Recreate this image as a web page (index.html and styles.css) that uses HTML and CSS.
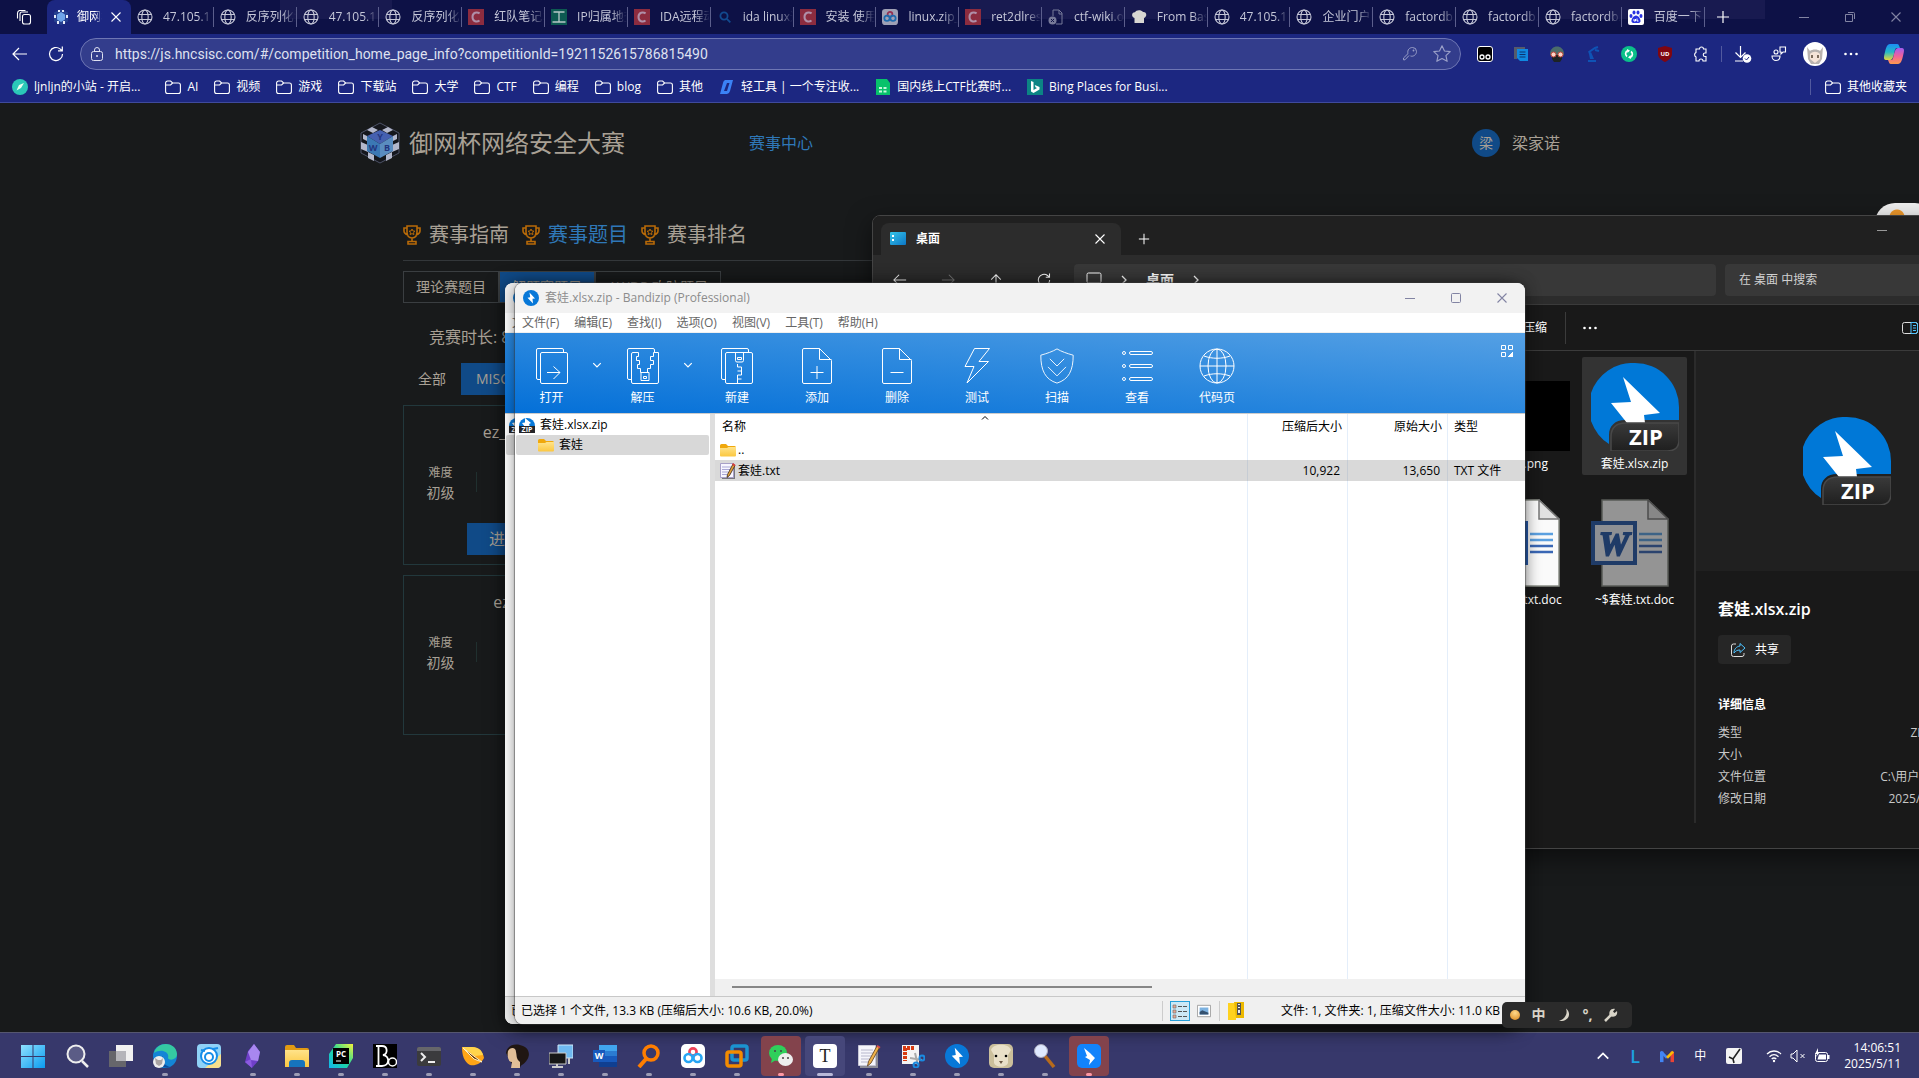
FILE: index.html
```html
<!DOCTYPE html>
<html lang="zh-CN">
<head>
  <meta charset="UTF-8" />
  <title>御网杯网络安全大赛</title>
  <link rel="stylesheet" href="styles.css">
</head>
<body>
  <svg class="defs" aria-hidden="true">
    <defs>
      <linearGradient id="gCopilot" x1="0" y1="0" x2="0" y2="1">
        <stop offset="0" stop-color="#1b8ef5" /><stop offset=".5" stop-color="#23b8c8" /><stop offset="1" stop-color="#e8d53a" />
      </linearGradient>
      <linearGradient id="gCopilot2" x1="0" y1="0" x2="0" y2="1">
        <stop offset="0" stop-color="#a05cf0" /><stop offset=".5" stop-color="#f0609c" /><stop offset="1" stop-color="#ff9a4d" />
      </linearGradient>
      <linearGradient id="gFolder" x1="0" y1="0" x2="0" y2="1">
        <stop offset="0" stop-color="#ffe38a" /><stop offset="1" stop-color="#fbc740" />
      </linearGradient>
      <linearGradient id="gWin" x1="0" y1="0" x2="1" y2="1">
        <stop offset="0" stop-color="#8fe1ff" /><stop offset="1" stop-color="#0a9bf0" />
      </linearGradient>
      <linearGradient id="gPc" x1="0" y1="1" x2="1" y2="0">
        <stop offset="0" stop-color="#12b5f0" /><stop offset=".5" stop-color="#1fd79a" /><stop offset="1" stop-color="#f5f53a" />
      </linearGradient>
      <linearGradient id="gBadge" x1="0" y1="0" x2="0" y2="1">
        <stop offset="0" stop-color="#3a3a3a" /><stop offset="1" stop-color="#1f1f1f" />
      </linearGradient>
      <linearGradient id="gDesk" x1="0" y1="0" x2="1" y2="1">
        <stop offset="0" stop-color="#35c6ea" /><stop offset="1" stop-color="#0c76c6" />
      </linearGradient>
    </defs>
    <symbol id="globe" viewBox="0 0 16 16"><g fill="none" stroke="currentColor" stroke-width="1.1"><circle cx="8" cy="8" r="7" /><ellipse cx="8" cy="8" rx="3.2" ry="7" /><path d="M1.6 5.5h12.8M1.6 10.5h12.8" /></g></symbol>
    <symbol id="cube" viewBox="0 0 42 42">
      <path d="M21 1l19 10v20L21 41 2 31V11z" fill="#15171d" stroke="#4d5368" />
      <path d="M13 5l6 3-5 3-6-3zM29 5l-6 3 5 3 6-3zM2 20l7 3v7l-7-3zM40 20l-7 3v7l7-3zM9 30l6 3v6l-6-3zM33 30l-6 3v6l6-3zM4 12l4 2v5l-4-2zM38 12l-4 2v5l4-2z" fill="#b3b8cc" />
      <path d="M21 8l13 6-13 8-13-8z" fill="#4560b0" /><path d="M8 14l13 8v14L8 29z" fill="#3b78b4" /><path d="M34 14l-13 8v14l13-7z" fill="#5a8cc0" />
      <text x="21" y="18" class="cube-letter">Y</text><text x="14" y="29" class="cube-letter">W</text><text x="28" y="29" class="cube-letter">B</text>
    </symbol>
    <symbol id="cube-sm" viewBox="0 0 16 16"><path d="M8 0l7 3.500v9L8 16l-7-3.500v-9z" fill="#27408f" /><path d="M5 1h2v2H5zM9 1h2v2H9zM1 6h2v3H1zM13 6h2v3h-2zM4 12h2v3H4zM10 12h2v3h-2z" fill="#e8ecf8" /><path d="M8 3l4 2.500v5L8 13l-4-2.500v-5z" fill="#6fa4ea" /></symbol>
    <symbol id="csdn" viewBox="0 0 16 16"><path d="M0 0h16v16H0z" fill="#8c2c3f" /><path d="M11.6 4.4C9 2.600 4.500 3.300 4.500 8s4.500 5.400 7 3.500" fill="none" stroke="#b08fa8" stroke-width="2" /></symbol>
    <symbol id="gong" viewBox="0 0 16 16"><path d="M0 0h16v16H0z" fill="#0d5a52" /><path d="M2.500 3h11M8 3v10M1.500 13h13" stroke="#b7c8c8" stroke-width="1.300" /></symbol>
    <symbol id="bluesearch" viewBox="0 0 16 16"><g fill="none" stroke="#124a8f" stroke-width="1.800"><circle cx="7" cy="7" r="3.600" /><path d="M9.800 9.800l3.500 3.500" /></g></symbol>
    <symbol id="netdisk" viewBox="0 0 24 24"><rect width="24" height="24" rx="5" fill="#fff" /><g fill="none" stroke-width="2.600"><circle cx="12" cy="8" r="3.600" stroke="#ee4359" /><circle cx="7.500" cy="14" r="4" stroke="#27a5f3" /><circle cx="16.500" cy="14" r="4" stroke="#27a5f3" /></g></symbol>
    <symbol id="brokenfile" viewBox="0 0 16 16"><path d="M5 7V1h6l3 3v11H8M11 1v4h3" fill="none" stroke="#777a99" /><circle cx="4.500" cy="11.500" r="4" fill="#777a99" /><path d="M3 10l3 3m0-3l-3 3" stroke="#101347" /></symbol>
    <symbol id="chef" viewBox="0 0 16 16"><path d="M3.500 14V9C0 8 .5 3 4 3.200 5 .5 10.500.5 12 3c3.800-.5 4.500 4.500 1 6v5z" fill="#d7d6d2" /></symbol>
    <symbol id="baidu" viewBox="0 0 16 16"><rect width="16" height="16" rx="2" fill="#fff" /><g fill="#2932e1"><ellipse cx="3" cy="7" rx="1.500" ry="2" /><ellipse cx="6" cy="3.500" rx="1.500" ry="2" /><ellipse cx="10" cy="3.500" rx="1.500" ry="2" /><ellipse cx="13" cy="7" rx="1.500" ry="2" /><path d="M8 6.500c2.500 0 5 4 4.500 6-.5 2-3 1.500-4.500 1.500s-4 .5-4.500-1.500c-.5-2 2-6 4.500-6z" /></g><path d="M6 10v2h1.500v-2M9 9.500V12h1.500" stroke="#fff" fill="none" /></symbol>
    <symbol id="tabs" viewBox="0 0 16 16"><g fill="none" stroke="currentColor" stroke-width="1.100"><rect x="6.500" y="5.500" width="8" height="9.500" rx="2" /><path d="M4 12V5a2 2 0 0 1 2-2h6M1.500 9.500V4a3 3 0 0 1 2-2.500h6" /></g></symbol>
    <symbol id="close" viewBox="0 0 12 12"><path d="M1.500 1.500l9 9m0-9l-9 9" stroke="currentColor" fill="none" stroke-width="1.100" /></symbol>
    <symbol id="min" viewBox="0 0 12 12"><path d="M1 6.500h10" stroke="currentColor" /></symbol>
    <symbol id="max" viewBox="0 0 12 12"><rect x="1.500" y="1.500" width="9" height="9" rx="1" fill="none" stroke="currentColor" /></symbol>
    <symbol id="restore" viewBox="0 0 12 12"><path d="M1.500 3.500h7v7h-7zM4 1.500h5.500a1 1 0 0 1 1 1V8" fill="none" stroke="currentColor" /></symbol>
    <symbol id="plus" viewBox="0 0 14 14"><path d="M7 1v12M1 7h12" stroke="currentColor" stroke-width="1.200" /></symbol>
    <symbol id="back" viewBox="0 0 16 16"><path d="M15 8H1m6-6L1 8l6 6" fill="none" stroke="currentColor" stroke-width="1.200" /></symbol>
    <symbol id="fwd" viewBox="0 0 16 16"><path d="M1 8h14M9 2l6 6-6 6" fill="none" stroke="currentColor" stroke-width="1.200" /></symbol>
    <symbol id="up" viewBox="0 0 16 16"><path d="M8 15V2M2.500 7.500L8 2l5.500 5.500" fill="none" stroke="currentColor" stroke-width="1.200" /></symbol>
    <symbol id="reload" viewBox="0 0 16 16"><path d="M14.500 8A6.500 6.500 0 1 1 12 2.900l2 1.600M14.300.5v4.300H10" fill="none" stroke="currentColor" stroke-width="1.200" /></symbol>
    <symbol id="lock" viewBox="0 0 16 16"><rect x="2.500" y="5.500" width="11" height="9" rx="2" fill="none" stroke="currentColor" /><path d="M5.500 5.500V4a2.500 2.500 0 0 1 5 0v1.500" fill="none" stroke="currentColor" /><circle cx="8" cy="10" r="1" fill="currentColor" /></symbol>
    <symbol id="key" viewBox="0 0 16 16"><path d="M7 9.500l-4 4.300H1.500V12L6 7.600C5 4 7.500 1.500 10.500 1.500a4 4 0 0 1 4 4c0 3-3 5.500-6 4.500" fill="none" stroke="currentColor" /><circle cx="11.500" cy="4.500" r=".9" fill="currentColor" /></symbol>
    <symbol id="star" viewBox="0 0 16 16"><path d="M8 .7l2.200 4.600 5.100.6-3.800 3.500 1.100 5.100L8 12l-4.600 2.500 1.100-5.100L.7 5.900l5.100-.6z" fill="none" stroke="currentColor" stroke-linejoin="round" /></symbol>
    <symbol id="tamper" viewBox="0 0 16 16"><rect x=".5" y=".5" width="15" height="15" rx="2.500" fill="#000" stroke="#fff" /><circle cx="5" cy="11" r="2" fill="#000" stroke="#fff" stroke-width="1.300" /><circle cx="11" cy="11" r="2" fill="#000" stroke="#fff" stroke-width="1.300" /></symbol>
    <symbol id="notes" viewBox="0 0 16 16"><path d="M1 1h11v2H4v10H1z" fill="#555b6b" /><path d="M4 3h11v12H7l-3-3z" fill="#1088e0" /><path d="M6.500 6h6M6.500 8.500h6M6.500 11h6" stroke="#0b3470" /></symbol>
    <symbol id="hacker" viewBox="0 0 16 16"><path d="M1 8C1-2 15-2 15 8l-1 2H2z" fill="#4b6c6a" /><path d="M3 9h10v4l-2 3H5l-2-3z" fill="#1d2324" /><circle cx="4.500" cy="8.500" r="2.500" fill="#f9d4c8" stroke="#c0453a" /><circle cx="11.500" cy="8.500" r="2.500" fill="#f9d4c8" stroke="#c0453a" /></symbol>
    <symbol id="robot" viewBox="0 0 16 16"><path d="M3 14h8v2H3zM5 13L4 8l2-2 3 7z" fill="#0f53b5" /><path d="M4 6l6-4 3-1M10 4l4 1M5 8l-1-3" fill="none" stroke="#0f53b5" stroke-width="2" /></symbol>
    <symbol id="sync" viewBox="0 0 16 16"><circle cx="8" cy="8" r="8" fill="#0bc08a" /><path d="M7 4.500C4 5.500 4 9 6 10.500M9 11.500c3-1 3-4.500 1-6" fill="none" stroke="#fff" stroke-width="1.700" /><path d="M6 3l3 1.500L6.500 7zM10 13l-3-1.500L9.500 9z" fill="#fff" /></symbol>
    <symbol id="ublock" viewBox="0 0 16 16"><path d="M8 0l7 2v6c0 4-4 6.500-7 8-3-1.500-7-4-7-8V2z" fill="#800610" /><text x="8" y="10" class="ub-letter">UD</text></symbol>
    <symbol id="puzzle" viewBox="0 0 16 16"><path d="M3 3h3.500a2 2 0 1 1 4 0H13v4h-1a1.500 1.500 0 0 0 0 3.500h1V15h-3a2 2 0 0 0-4 0H3v-4a2.500 2.500 0 0 1 0-4.500z" fill="none" stroke="currentColor" stroke-width="1.100" /></symbol>
    <symbol id="download" viewBox="0 0 18 18"><path d="M6.500 1v11M1.500 7.500l5 5 5-5M1 16h8" fill="none" stroke="currentColor" stroke-width="1.200" /><circle cx="13" cy="13.500" r="4.300" fill="#fff" /><path d="M11 13.500l1.500 1.500 2.500-3" fill="none" stroke="#1c2781" /></symbol>
    <symbol id="share-p" viewBox="0 0 16 16"><g fill="none" stroke="currentColor" stroke-width="1.100"><circle cx="5" cy="6" r="2" /><path d="M1 10h8c0 6-8 6-8 0zM9 1h5.500v5H12l-2 2V6H9z" /></g></symbol>
    <symbol id="dots" viewBox="0 0 16 16"><g fill="currentColor"><circle cx="2.500" cy="8" r="1.300" /><circle cx="8" cy="8" r="1.300" /><circle cx="13.500" cy="8" r="1.300" /></g></symbol>
    <symbol id="copilot" viewBox="0 0 22 22"><path d="M7 1h7c2 0 2 2 3 4h-3c-2 0-2 2-3 6s-2 6-4 6H3c-3 0-2-4-1-8s2-8 5-8z" fill="url(#gCopilot)" /><path d="M15 21H8c-2 0-2-2-3-4h3c2 0 2-2 3-6s2-6 4-6h4c3 0 2 4 1 8s-2 8-5 8z" fill="url(#gCopilot2)" /></symbol>
    <symbol id="folder-o" viewBox="0 0 16 16"><path d="M.6 4a2 2 0 0 1 2-2h3l2 2h5.800a2 2 0 0 1 2 2v6.500a2 2 0 0 1-2 2H2.600a2 2 0 0 1-2-2zM.6 6h5l2-2" fill="none" stroke="currentColor" stroke-width="1.100" /></symbol>
    <symbol id="leaf" viewBox="0 0 16 16"><circle cx="8" cy="8" r="8" fill="#2bc8b8" /><path d="M4.500 11.500L7 6l5-2-3 5z" fill="#eafff0" /></symbol>
    <symbol id="qtool" viewBox="0 0 16 16"><path d="M6 1h8l-3 11a4 4 0 0 1-3 3H1L4 4a4 4 0 0 1 2-3z" fill="#3b82f6" /><path d="M8 4h2.500L8 12H5z" fill="#1c2781" /></symbol>
    <symbol id="sheet" viewBox="0 0 16 16"><path d="M1 0h11l3 4v12H1z" fill="#07c26b" /><path d="M4 8h3v2H4zM8.500 8h3v2h-3zM4 11.500h3v2H4zM8.500 11.500h3v2h-3z" fill="#c6f7dd" /></symbol>
    <symbol id="bing" viewBox="0 0 16 16"><path d="M0 0h16v16H0z" fill="#0c8484" /><path d="M4 2l2.500 1v8L10 9 8.500 8.300 7.700 6 12.500 8v2.500L6.500 14 4 12.500z" fill="#fff" /></symbol>
    <symbol id="trophy" viewBox="0 0 18 20"><g fill="none" stroke="#b86a08" stroke-width="1.600"><path d="M4 1h10v6c0 4-2 6-5 6s-5-2-5-6zM4 3H1v3c0 2 1 3 4 4M14 3h3v3c0 2-1 3-4 4M9 13v3M5 16.500h8v2.500H5z" /><path d="M9 4l1 2 2 .2-1.500 1.400.4 2L9 8.600l-1.900 1 .4-2L6 6.200 8 6z" stroke-width="1" /></g></symbol>
    <symbol id="bolt-app" viewBox="0 0 16 16"><circle cx="8" cy="8" r="8" fill="#0878d8" /><path d="M6.500 2.500l5.500 6-2.500.2.500 4.800L4.500 7.800l2.700-.5z" fill="#fff" /></symbol>
    <symbol id="zip-sm" viewBox="0 0 16 16"><path d="M0 9a8 8 0 0 1 16 0z" fill="#0878d8" /><path d="M6 1l6 5-2 1 1 3H6L3 6l3-.5z" fill="#fff" /><path d="M0 9h16v7H0z" fill="#242428" /><text x="8" y="15" class="zip-sm-letter">ZIP</text></symbol>
    <symbol id="zip-lg" viewBox="0 0 88 88">
      <path d="M44 0a44 44 0 0 1 44 44v13H34c-10 0-16 6-16 15v9A44 44 0 0 1 44 0z" fill="#0078d7" />
      <path d="M32 14l37 36-16 2 1 8H36L20 40l20-1z" fill="#fff" />
      <path d="M20 88V74c0-9 5-14 15-14h53v17c0 8-5 11-12 11z" fill="url(#gBadge)" stroke="#484848" stroke-width="1.500" />
      <text x="55" y="82" class="zip-letter">ZIP</text>
    </symbol>
    <symbol id="folder" viewBox="0 0 16 16"><path d="M0 3.500A1.500 1.500 0 0 1 1.500 2H6l2 2h6.500A1.500 1.500 0 0 1 16 5.500V8H0z" fill="#f0a80c" /><path d="M0 6h7l1.500-1H16v8.500a1 1 0 0 1-1 1H1a1 1 0 0 1-1-1z" fill="url(#gFolder)" /></symbol>
    <symbol id="notepad" viewBox="0 0 16 16"><path d="M2 2h13v14H2z" fill="#77777d" /><path d="M.5.5h13v14H.5z" fill="#f7f6ff" stroke="#a7a0c8" /><path d="M2 4h9M2 6.500h8M2 9h6M2 11.500h5" stroke="#a9a7d6" /><path d="M13 1l2 1.500-5.500 10-2.500 2 .5-3z" fill="#e4a23b" stroke="#33251a" stroke-width=".8" /><path d="M13 0l2.500 2-1 1.500-2.500-2z" fill="#d93b3b" /></symbol>
    <symbol id="t-open" viewBox="0 0 32 36"><path d="M4.500 31.500H2a1.500 1.500 0 0 1-1.500-1.500V2A1.500 1.500 0 0 1 2 .5h24A1.500 1.500 0 0 1 27.500 2v2.500" /><rect x="4.500" y="4.500" width="27" height="31" rx="1.500" /><path d="M11 24.500h13M17.500 18.500l6.500 6-6.500 6.500" /></symbol>
    <symbol id="t-extract" viewBox="0 0 32 36"><path d="M4.500 31.500H2a1.500 1.500 0 0 1-1.500-1.500V2A1.500 1.500 0 0 1 2 .5h24A1.500 1.500 0 0 1 27.500 2v2.500" /><path d="M11.500 4.500H6A1.500 1.500 0 0 0 4.500 6v28A1.500 1.500 0 0 0 6 35.500h24a1.500 1.500 0 0 0 1.500-1.500V4.500h-5v4h-3v4h3v4h-3v4h-3v4h-1.500M11.500 4.500v4h-2v4h3v4h-2v4h3v4h2" /><path d="M14 24.500h8v8h-8zM16.500 28.500h3v2h-3z" /></symbol>
    <symbol id="t-new" viewBox="0 0 32 36"><path d="M4.500 31.500H2a1.500 1.500 0 0 1-1.500-1.500V2A1.500 1.500 0 0 1 2 .5h24A1.500 1.500 0 0 1 27.500 2v2.500" /><rect x="4.500" y="4.500" width="27" height="31" rx="1.500" /><path d="M14.500 4.500v8a1.500 1.500 0 0 0 1.500 1.500h5a1.500 1.500 0 0 0 1.500-1.500v-8M16.500 9.500h4v2h-4zM16.500 16v3h4v4h-4M20.500 23v4h-4M16.500 27v4h4M16.500 31v4.500" /></symbol>
    <symbol id="t-add" viewBox="0 0 32 36"><path d="M18.500.5H3A1.500 1.500 0 0 0 1.500 2v32A1.500 1.500 0 0 0 3 35.500h26a1.500 1.500 0 0 0 1.500-1.500V12.500zM18.500.5v11h12M9.500 24.500h13M16 18v13" /></symbol>
    <symbol id="t-del" viewBox="0 0 32 36"><path d="M18.500.5H3A1.500 1.500 0 0 0 1.500 2v32A1.500 1.500 0 0 0 3 35.500h26a1.500 1.500 0 0 0 1.500-1.500V12.500zM18.500.5v11h12M9.500 24.500h13" /></symbol>
    <symbol id="t-test" viewBox="0 0 32 36"><path d="M13.500.5h15L18 13.500h9.500L6 35l7-16.500H4z" /></symbol>
    <symbol id="t-scan" viewBox="0 0 38 40"><path d="M19 1C14 4 8 6 1 8c0 17 5 27 18 31 13-4 18-14 18-31C30 6 24 4 19 1zM11 12l8 8 8-8M9 21l10 10 10-10" /></symbol>
    <symbol id="t-view" viewBox="0 0 32 36"><circle cx="3" cy="5" r="1.500" /><circle cx="3" cy="18" r="1.500" /><circle cx="3" cy="31" r="1.500" /><rect x="8.500" y="3.500" width="23" height="3" rx="1.500" /><rect x="8.500" y="16.500" width="23" height="3" rx="1.500" /><rect x="8.500" y="29.500" width="23" height="3" rx="1.500" /></symbol>
    <symbol id="t-globe" viewBox="0 0 36 36"><circle cx="18" cy="18" r="17" /><ellipse cx="18" cy="18" rx="9" ry="17" /><path d="M18 1v34M1 18h34M5 8c8 3 18 3 26 0M5 28c8-3 18-3 26 0" /></symbol>
    <symbol id="chev" viewBox="0 0 8 8"><path d="M1 2.500l3 3 3-3" fill="none" stroke="currentColor" /></symbol>
    <symbol id="skins" viewBox="0 0 12 12"><path d="M.5.5h4v4h-4zM7.500.5h4v4h-4zM.5 7.500h4v4h-4z" fill="none" stroke="#fff" /><path d="M12 7v5H7z" fill="#fff" /></symbol>
    <symbol id="desk" viewBox="0 0 16 14"><rect width="16" height="13" rx="1" fill="url(#gDesk)" /><path d="M2 3h2v2H2zM2 7h2v2H2z" fill="#fff" /></symbol>
    <symbol id="pc" viewBox="0 0 16 16"><rect x="1" y="1" width="14" height="10" rx="1.500" fill="none" stroke="currentColor" /><path d="M5 14.500h6M8 11v3" stroke="currentColor" /></symbol>
    <symbol id="right" viewBox="0 0 8 12"><path d="M2 2l4 4-4 4" fill="none" stroke="currentColor" stroke-width="1.300" /></symbol>
    <symbol id="pane" viewBox="0 0 16 12"><rect x=".5" y=".5" width="15" height="11" rx="2" fill="none" stroke="#ddd" /><path d="M9 .5h4.500a2 2 0 0 1 2 2v7a2 2 0 0 1-2 2H9zM11 3.500h3M11 6h3M11 8.500h3" fill="none" stroke="#4cc2ff" /></symbol>
    <symbol id="doc" viewBox="0 0 78 88">
      <path d="M11 1h46l20 19v67H11z" fill="#fafafa" stroke="#8a8f86" stroke-width="1.500" /><path d="M57 1v19h20z" fill="#e2e2e2" stroke="#777" stroke-width="1.500" />
      <path d="M48 35h23M48 41h23" stroke="#5ba0e0" stroke-width="2.500" /><path d="M48 47h23M48 53h23" stroke="#3a67b5" stroke-width="2.500" />
      <path d="M2 24h42v40H2z" fill="#eef2fa" stroke="#2457a8" stroke-width="4" /><text x="23" y="56" class="doc-letter">W</text>
    </symbol>
    <symbol id="share" viewBox="0 0 16 16"><path d="M6 2H3.500A2 2 0 0 0 1.500 4v8.500a2 2 0 0 0 2 2h8.500a2 2 0 0 0 2-2V11" fill="none" stroke="#ddd" /><path d="M10 1.500L15 6l-5 4.500V8c-3 0-4.500 1-6 3 0-4 2.500-6.500 6-7z" fill="none" stroke="#4cc2ff" /></symbol>
    <symbol id="s-detail" viewBox="0 0 16 16"><path d="M1 2h3v3H1zM1 7h3v3H1zM1 12h3v3H1z" fill="#e9a48f" stroke="#777" stroke-width=".7" /><path d="M6 3.500h4m1 0h4M6 8.500h4m1 0h4M6 13.500h4m1 0h4" stroke="#555" /></symbol>
    <symbol id="s-pic" viewBox="0 0 16 14"><path d="M.5.5h15v13H.5z" fill="#fff" stroke="#999" /><path d="M3 3h10v8H3z" fill="#7db2e0" /><path d="M3 8l3-2 7 3v2H3z" fill="#34516f" /></symbol>
    <symbol id="s-zip" viewBox="0 0 16 18"><path d="M0 1h6l2 2v15H0z" fill="#ffd21f" /><path d="M6 0h10v16H8z" fill="#edb900" /><path d="M9 1h4v12H9z" fill="#555" /><path d="M10 2h2v1h-2zM10 5h2v1h-2zM10 8h2v3h-2z" fill="#eee" /></symbol>
    <symbol id="moon" viewBox="0 0 14 14"><path d="M9 .5C15 5 12 14 2 13c6-2 9-7 7-12.500z" fill="#d8d4c8" /></symbol>
    <symbol id="wrench" viewBox="0 0 14 14"><path d="M1 13l6-6" fill="none" stroke="#d8d4c8" stroke-width="2.500" /><path d="M6 8C4 4 7 0 11 1L9 3.500l1.500 1.500L13 3c1 4-2 7-7 5z" fill="#d8d4c8" /></symbol>
    <symbol id="w-start" viewBox="0 0 24 24"><path d="M0 1h11.500v11H0zM12.500 1H24v11H12.500zM0 13h11.500v11H0zM12.500 13H24v11H12.500z" fill="url(#gWin)" /></symbol>
    <symbol id="w-search" viewBox="0 0 24 24"><circle cx="11" cy="10" r="8.500" fill="#5b5c86" stroke="#eee" stroke-width="2" /><path d="M17 17l6 6" stroke="#eee" stroke-width="2.500" /></symbol>
    <symbol id="w-task" viewBox="0 0 24 24"><path d="M7 1h17v16H7z" fill="#f1f1f1" /><path d="M0 7h17v16H0z" fill="#66666b" /><path d="M7 7h10v10H7z" fill="#b5b5ba" /></symbol>
    <symbol id="w-edge" viewBox="0 0 24 24"><circle cx="12" cy="12" r="12" fill="#1485d6" /><path d="M1 9C4-3 23-3 24 10c0 6-8 7-9 4 2-6-7-10-14-5z" fill="#35c9a2" /><path d="M10 12c-2 5 2 10 8 11-6 2-12-1-13-6z" fill="#0b4fa0" /><circle cx="6" cy="18" r="6" fill="#eee" /><path d="M2 14l3 2h3l2-2-1 6-3 2-3-2z" fill="#aaa4a2" /></symbol>
    <symbol id="w-blue" viewBox="0 0 24 24"><rect width="24" height="24" rx="4" fill="#8fd2f7" /><path d="M24 10v10a4 4 0 0 1-4 4H8z" fill="#f8df8c" /><circle cx="12" cy="12" r="8" fill="#fff" stroke="#168de8" stroke-width="2" /><circle cx="12" cy="13" r="4" fill="none" stroke="#168de8" stroke-width="2" /><path d="M4 6l4 1M16 5l5-1" stroke="#168de8" stroke-width="2" /></symbol>
    <symbol id="w-obs" viewBox="0 0 24 24"><path d="M13 0l6 8-2 9-6 7-7-6 3-11z" fill="#6f3fc9" /><path d="M13 0l-6 8 3 8 7 1 2-9z" fill="#a887f0" /><path d="M4 18l6-3 1 9z" fill="#8c5be0" /></symbol>
    <symbol id="w-folder" viewBox="0 0 24 24"><path d="M0 3a2 2 0 0 1 2-2h7l2 3h11a2 2 0 0 1 2 2v4H0z" fill="#e29a12" /><path d="M0 6h24v17H0z" fill="url(#gFolder)" /><path d="M4 23v-4a3 3 0 0 1 3-3h10a3 3 0 0 1 3 3v4z" fill="#1674bd" /></symbol>
    <symbol id="w-pc" viewBox="0 0 24 24"><path d="M7 0h17v14l-6 10H0V10z" fill="url(#gPc)" /><path d="M4 4h16v16H4z" fill="#000" /><text x="12" y="13" class="pc-letter">PC</text><path d="M7 17h5" stroke="#fff" /></symbol>
    <symbol id="w-b" viewBox="0 0 24 24"><path d="M0 0h24v24H0z" fill="#000" /><path d="M3 2h6c6 0 6 8 1 9 7 1 7 11-1 11H3M5.500 2v20" fill="none" stroke="#fff" stroke-width="1.800" /><circle cx="19.500" cy="18" r="4" fill="none" stroke="#fff" stroke-width="1.500" /></symbol>
    <symbol id="w-term" viewBox="0 0 24 24"><rect y="3" width="24" height="19" rx="2" fill="#3b3b3d" /><path d="M0 5a2 2 0 0 1 2-2h20a2 2 0 0 1 2 2v2H0z" fill="#66666a" /><path d="M4 9l4 4-4 4M11 18h7" fill="none" stroke="#eee" stroke-width="2" /></symbol>
    <symbol id="w-nav" viewBox="0 0 24 24"><path d="M1 3h10c7 0 11 5 12 11-3 6-9 8-14 7-6-3-8-10-8-18z" fill="#ffa516" /><path d="M1 3h10c7 0 10 4 11 8l-8 1z" fill="#ffd44c" /><path d="M2 4l19 14-8-3z" fill="#6b3b05" stroke="#fff3c8" /></symbol>
    <symbol id="w-lady" viewBox="0 0 24 24"><path d="M1 9C2 0 12-1 18 2c7 3 7 10 4 14-3 5-6 4-7 8H9z" fill="#201612" /><path d="M3 7c2-4 8-4 8 1 1 4 0 7 4 10v6H6l1-6C3 18 2 12 3 7z" fill="#e2bf98" /></symbol>
    <symbol id="w-remote" viewBox="0 0 24 24"><path d="M9 1h15v13H9z" fill="#6fb9f0" stroke="#cfe6f7" /><path d="M0 9h17v11H0z" fill="#161616" stroke="#ccc" /><path d="M8 20v3M3 23h11M20 14v6" stroke="#ccc" stroke-width="2" /></symbol>
    <symbol id="w-word" viewBox="0 0 24 24"><path d="M6 1h18v6H6z" fill="#41a5ee" /><path d="M6 7h18v5H6z" fill="#2b7cd3" /><path d="M6 12h18v6H6z" fill="#185abd" /><path d="M6 18h18v5H6z" fill="#103f91" /><path d="M0 6h12v12H0z" fill="#185abd" /><text x="6" y="15" class="word-letter">W</text></symbol>
    <symbol id="w-every" viewBox="0 0 24 24"><circle cx="14" cy="9" r="7" fill="none" stroke="#ff7e00" stroke-width="3.500" /><path d="M9 15l-7 8" stroke="#ff7e00" stroke-width="4" /></symbol>
    <symbol id="w-vm" viewBox="0 0 24 24"><rect x="7" y="2" width="15" height="14" rx="2" fill="none" stroke="#1b93d1" stroke-width="3.500" /><rect x="2" y="8" width="14" height="14" rx="2" fill="none" stroke="#f38b00" stroke-width="3.500" /></symbol>
    <symbol id="w-wechat" viewBox="0 0 24 24"><ellipse cx="9" cy="9" rx="9" ry="8" fill="#2fcf5b" /><path d="M3 14l-1 5 5-3z" fill="#2fcf5b" /><ellipse cx="16.500" cy="15.500" rx="7.500" ry="6.500" fill="#eee" /><g fill="#444"><circle cx="6" cy="7" r="1" /><circle cx="12" cy="7" r="1" /><circle cx="14" cy="14" r="1" /><circle cx="19" cy="14" r="1" /></g></symbol>
    <symbol id="w-typora" viewBox="0 0 24 24"><rect x="0" y="0" width="24" height="24" rx="4" fill="#fff" /><text x="12" y="18" class="typora-letter">T</text></symbol>
    <symbol id="w-notepad" viewBox="0 0 24 24"><path d="M3 3h18v21H3z" fill="#8c8c96" /><path d="M1.500 1.500h17v20h-17z" fill="#f5f5fb" stroke="#c7c7d6" /><path d="M4 6h12M4 9h12M4 12h11M4 15h9M4 18h8" stroke="#b7b7cc" /><path d="M20 2l2.500 1.500L14 19l-3.500 3 1-4.500z" fill="#f0b24b" stroke="#5a3c1c" stroke-width=".8" /><path d="M20.500 1l3 2-1 1.500-3-2z" fill="#d94b4b" /></symbol>
    <symbol id="w-snip" viewBox="0 0 24 24"><path d="M1 1h17v19H1z" fill="#f4f4f4" /><path d="M2 4h12M4 4v13" stroke="#d83b12" stroke-width="4" stroke-dasharray="3 1" /><path d="M9 14l12 2M14 9l3 12" stroke="#aaa" stroke-width="2" /><circle cx="21" cy="14" r="2.500" fill="none" stroke="#1a8ae0" stroke-width="2" /><circle cx="15" cy="21" r="2.500" fill="none" stroke="#1a8ae0" stroke-width="2" /></symbol>
    <symbol id="w-alpaca" viewBox="0 0 24 24"><rect width="24" height="24" rx="5" fill="#cbbf9b" /><path d="M2 6c2-7 18-7 20 0l-3 5v8c-2 5-12 5-14 0v-8z" fill="#e9e0c8" /><circle cx="7" cy="12" r="1.300" /><circle cx="17" cy="12" r="1.300" /><path d="M10 17h4l-2 3z" fill="#6b5844" /></symbol>
    <symbol id="w-glass" viewBox="0 0 24 24"><path d="M12 12l9 11" stroke="#b76b1c" stroke-width="3.500" /><circle cx="8" cy="7" r="6.500" fill="#dfe9ff" stroke="#aab" /></symbol>
    <symbol id="w-todesk" viewBox="0 0 24 24"><rect width="24" height="24" rx="5" fill="#1283fb" /><path d="M7 4l6 5 5 5-6 7 1-5-5-3 2-1z" fill="#fff" /></symbol>
    <symbol id="l-m" viewBox="0 0 16 16"><path d="M2 15V3" stroke="#4285f4" stroke-width="4" /><path d="M14 15V3" stroke="#ea4335" stroke-width="4" /><path d="M1 3l7 7" stroke="#4285f4" stroke-width="3" /><path d="M15 3l-7 7" stroke="#fbbc04" stroke-width="3" /></symbol>
    <symbol id="l-wifi" viewBox="0 0 16 16"><g fill="none" stroke="currentColor" stroke-width="1.300"><path d="M1 6c4-4 10-4 14 0M3.500 8.700c3-2.700 6-2.700 9 0M5.700 11c1.500-1.300 3-1.300 4.600 0" /></g><circle cx="8" cy="13" r="1.200" fill="currentColor" /></symbol>
    <symbol id="l-mute" viewBox="0 0 16 16"><path d="M1 6h2l4-4v12l-4-4H1zM10.500 6l4 4m0-4l-4 4" fill="none" stroke="currentColor" /></symbol>
    <symbol id="l-batt" viewBox="0 0 16 16"><rect x="1.500" y="4.500" width="12" height="9" rx="2" fill="none" stroke="currentColor" /><path d="M5 6.500h7v5H3.500zM14 7h1.500v4H14z" fill="currentColor" /><path d="M4 0L1 6h2l-1 3 4-5H4z" fill="currentColor" /></symbol>
    <symbol id="l-pen" viewBox="0 0 16 16"><rect width="16" height="16" rx="2" fill="#f4f4f4" /><path d="M3 9l4 2 7-10M7 11l1 4" fill="none" stroke="#222" stroke-width="1.600" /></symbol>
    <symbol id="avatar" viewBox="0 0 24 24"><circle cx="12" cy="12" r="12" fill="#fff" /><path d="M4 5l3 4c2-2 8-2 10 0l3-4-1 12-3 5H8l-3-5z" fill="#b9b3b0" /><path d="M7 12c3-3 7-3 10 0v5l-5 4-5-4z" fill="#f6e4d8" /><path d="M9 13v3M15 13v3" stroke="#543" stroke-width="1.500" /></symbol>
  </svg>

  <header class="browser">
    <div class="tab-strip">
      <button class="tabs-menu" aria-label="标签页操作"><svg class="i16"><use href="#tabs" /></svg></button>
      <div class="tab active"><svg class="i16"><use href="#cube-sm" /></svg><span class="tab-title">御网杯</span><button aria-label="关闭标签页"><svg class="i12"><use href="#close" /></svg></button></div>
      <div class="tab-list">
        <div class="tab"><svg class="i16"><use href="#globe" /></svg><span class="tab-title">47.105.113</span></div>
        <div class="tab"><svg class="i16"><use href="#globe" /></svg><span class="tab-title">反序列化漏</span></div>
        <div class="tab"><svg class="i16"><use href="#globe" /></svg><span class="tab-title">47.105.113</span></div>
        <div class="tab"><svg class="i16"><use href="#globe" /></svg><span class="tab-title">反序列化漏</span></div>
        <div class="tab"><svg class="i16"><use href="#csdn" /></svg><span class="tab-title">红队笔记本</span></div>
        <div class="tab"><svg class="i16"><use href="#gong" /></svg><span class="tab-title">IP归属地查</span></div>
        <div class="tab"><svg class="i16"><use href="#csdn" /></svg><span class="tab-title">IDA远程动</span></div>
        <div class="tab"><svg class="i16"><use href="#bluesearch" /></svg><span class="tab-title">ida linux远</span></div>
        <div class="tab"><svg class="i16"><use href="#csdn" /></svg><span class="tab-title">安装 使用</span></div>
        <div class="tab dim"><svg class="i16"><use href="#netdisk" /></svg><span class="tab-title">linux.zip_免</span></div>
        <div class="tab"><svg class="i16"><use href="#csdn" /></svg><span class="tab-title">ret2dlresolve</span></div>
        <div class="tab"><svg class="i16"><use href="#brokenfile" /></svg><span class="tab-title">ctf-wiki.org</span></div>
        <div class="tab"><svg class="i16"><use href="#chef" /></svg><span class="tab-title">From Base</span></div>
        <div class="tab"><svg class="i16"><use href="#globe" /></svg><span class="tab-title">47.105.113</span></div>
        <div class="tab"><svg class="i16"><use href="#globe" /></svg><span class="tab-title">企业门户网</span></div>
        <div class="tab"><svg class="i16"><use href="#globe" /></svg><span class="tab-title">factordb.c</span></div>
        <div class="tab"><svg class="i16"><use href="#globe" /></svg><span class="tab-title">factordb.c</span></div>
        <div class="tab"><svg class="i16"><use href="#globe" /></svg><span class="tab-title">factordb.c</span></div>
        <div class="tab"><svg class="i16"><use href="#baidu" /></svg><span class="tab-title">百度一下，</span></div>
      </div>
      <button class="new-tab" aria-label="新建标签页"><svg class="i14"><use href="#plus" /></svg></button>
      <div class="win-controls">
        <button aria-label="最小化"><svg class="i12"><use href="#min" /></svg></button>
        <button aria-label="还原"><svg class="i12"><use href="#restore" /></svg></button>
        <button aria-label="关闭"><svg class="i12"><use href="#close" /></svg></button>
      </div>
    </div>

    <div class="toolbar">
      <button class="nav-btn" aria-label="后退"><svg class="i16"><use href="#back" /></svg></button>
      <button class="nav-btn" aria-label="刷新"><svg class="i16"><use href="#reload" /></svg></button>
      <div class="address">
        <svg class="i16"><use href="#lock" /></svg>
        <input type="text" aria-label="地址栏" value="https://js.hncsisc.com/#/competition_home_page_info?competitionId=1921152615786815490">
        <button class="faded" aria-label="密码"><svg class="i16"><use href="#key" /></svg></button>
        <button class="faded" aria-label="收藏"><svg class="i18"><use href="#star" /></svg></button>
      </div>
      <div class="extensions">
        <button aria-label="脚本管理"><svg class="i16"><use href="#tamper" /></svg></button>
        <button aria-label="笔记"><svg class="i16"><use href="#notes" /></svg></button>
        <button aria-label="工具箱"><svg class="i16"><use href="#hacker" /></svg></button>
        <button aria-label="自动化"><svg class="i16"><use href="#robot" /></svg></button>
        <button aria-label="同步"><svg class="i16"><use href="#sync" /></svg></button>
        <button aria-label="拦截"><svg class="i16"><use href="#ublock" /></svg></button>
        <button aria-label="扩展"><svg class="i16"><use href="#puzzle" /></svg></button>
      </div>
      <div class="extensions right-tools">
        <button aria-label="下载"><svg class="i18"><use href="#download" /></svg></button>
        <button aria-label="共享"><svg class="i16"><use href="#share-p" /></svg></button>
        <button aria-label="个人资料"><svg class="i24"><use href="#avatar" /></svg></button>
        <button aria-label="更多"><svg class="i16"><use href="#dots" /></svg></button>
      </div>
      <button class="copilot" aria-label="Copilot"><svg class="i22"><use href="#copilot" /></svg></button>
    </div>

    <nav class="bookmarks">
      <a href="#" class="first"><svg class="i16"><use href="#leaf" /></svg>ljnljn的小站 - 开启...</a>
      <a href="#"><svg class="i16"><use href="#folder-o" /></svg>AI</a>
      <a href="#"><svg class="i16"><use href="#folder-o" /></svg>视频</a>
      <a href="#"><svg class="i16"><use href="#folder-o" /></svg>游戏</a>
      <a href="#"><svg class="i16"><use href="#folder-o" /></svg>下载站</a>
      <a href="#"><svg class="i16"><use href="#folder-o" /></svg>大学</a>
      <a href="#"><svg class="i16"><use href="#folder-o" /></svg>CTF</a>
      <a href="#"><svg class="i16"><use href="#folder-o" /></svg>编程</a>
      <a href="#"><svg class="i16"><use href="#folder-o" /></svg>blog</a>
      <a href="#"><svg class="i16"><use href="#folder-o" /></svg>其他</a>
      <a href="#"><svg class="i16"><use href="#qtool" /></svg>轻工具 | 一个专注收...</a>
      <a href="#"><svg class="i16"><use href="#sheet" /></svg>国内线上CTF比赛时...</a>
      <a href="#"><svg class="i16"><use href="#bing" /></svg>Bing Places for Busi...</a>
      <a href="#" class="other"><svg class="i16"><use href="#folder-o" /></svg>其他收藏夹</a>
    </nav>
  </header>

  <main class="site">
    <div class="site-head">
      <svg class="site-logo"><use href="#cube" /></svg>
      <h1>御网杯网络安全大赛</h1>
      <a href="#" class="center-link">赛事中心</a>
      <div class="user"><span class="user-badge">梁</span>梁家诺</div>
    </div>
    <div class="site-body">
      <nav class="site-tabs">
        <a href="#"><svg><use href="#trophy" /></svg>赛事指南</a>
        <a href="#" class="on"><svg><use href="#trophy" /></svg>赛事题目</a>
        <a href="#"><svg><use href="#trophy" /></svg>赛事排名</a>
      </nav>
      <div class="segment">
        <button>理论赛题目</button><button class="on">解题赛题目</button><button>AWDP 攻防题目</button>
      </div>
      <p class="duration">竞赛时长: 8小时</p>
      <div class="filters"><button>全部</button><button class="on">MISC</button></div>
      <section class="card">
        <h2>ez_xor_zip</h2>
        <dl><div><dt>难度</dt><dd>初级</dd></div></dl>
        <button class="enter">进入答题</button>
      </section>
      <section class="card">
        <h2>ez_pwn</h2>
        <dl><div><dt>难度</dt><dd>初级</dd></div></dl>
      </section>
    </div>
  </main>

  <div class="float-widget"></div>

  <section class="explorer">
    <div class="ex-top">
      <div class="ex-tab"><svg><use href="#desk" /></svg><b>桌面</b><button aria-label="关闭"><svg class="i12"><use href="#close" /></svg></button></div>
      <button class="ex-plus" aria-label="新标签页"><svg class="i12"><use href="#plus" /></svg></button>
      <button class="ex-min" aria-label="最小化"><svg class="i12"><use href="#min" /></svg></button>
    </div>
    <div class="ex-nav">
      <div class="ex-arrows">
        <button aria-label="后退"><svg class="i14"><use href="#back" /></svg></button>
        <button aria-label="前进" class="off"><svg class="i14"><use href="#fwd" /></svg></button>
        <button aria-label="上移"><svg class="i14"><use href="#up" /></svg></button>
        <button aria-label="刷新"><svg class="i14"><use href="#reload" /></svg></button>
      </div>
      <div class="ex-path"><svg class="i16"><use href="#pc" /></svg><svg class="crumb"><use href="#right" /></svg><b>桌面</b><svg class="crumb"><use href="#right" /></svg></div>
      <input type="search" class="ex-search" placeholder="在 桌面 中搜索" aria-label="搜索">
    </div>
    <div class="ex-cmd">
      <button>压缩</button>
      <button class="ex-more" aria-label="更多"><svg class="i16"><use href="#dots" /></svg></button>
      <button class="ex-pane-btn" aria-label="预览"><svg><use href="#pane" /></svg></button>
    </div>
    <div class="ex-body">
      <div class="ex-files">
        <figure><div class="thumb"><div class="black-thumb"></div></div><figcaption>111.png</figcaption></figure>
        <figure class="selected"><div class="thumb"><svg class="zip-icon"><use href="#zip-lg" /></svg></div><figcaption>套娃.xlsx.zip</figcaption></figure>
        <figure><div class="thumb"><svg class="doc-icon"><use href="#doc" /></svg></div><figcaption>1套娃.txt.doc</figcaption></figure>
        <figure class="ghost"><div class="thumb"><svg class="doc-icon"><use href="#doc" /></svg></div><figcaption>~$套娃.txt.doc</figcaption></figure>
      </div>
      <aside class="ex-preview">
        <div class="ex-picture"><svg class="zip-icon"><use href="#zip-lg" /></svg></div>
        <div class="ex-info">
          <h2>套娃.xlsx.zip</h2>
          <button class="share-btn"><svg class="i16"><use href="#share" /></svg>共享</button>
          <h3>详细信息</h3>
          <dl>
            <div><dt>类型</dt><dd>ZIP 压缩文件</dd></div>
            <div><dt>大小</dt><dd>11 KB</dd></div>
            <div><dt>文件位置</dt><dd>C:\用户\ljnljn\桌面</dd></div>
            <div><dt>修改日期</dt><dd>2025/5/11 14:06</dd></div>
          </dl>
        </div>
      </aside>
    </div>
  </section>

  <section class="bandizip bz-back">
    <div class="bz-title"><svg class="i16"><use href="#bolt-app" /></svg></div>
    <div class="bz-menu"><button>文件(F)</button></div>
    <div class="bz-tools"></div>
    <div class="bz-main">
      <ul class="bz-tree"><li><svg class="i16"><use href="#zip-sm" /></svg></li><li class="on"></li></ul>
    </div>
    <div class="bz-status"><span>已选择</span></div>
  </section>

  <section class="bandizip bz-front">
    <div class="bz-title">
      <svg class="i16"><use href="#bolt-app" /></svg>套娃.xlsx.zip - Bandizip (Professional)
      <div class="win-controls">
        <button aria-label="最小化"><svg class="i12"><use href="#min" /></svg></button>
        <button aria-label="最大化"><svg class="i12"><use href="#max" /></svg></button>
        <button aria-label="关闭"><svg class="i12"><use href="#close" /></svg></button>
      </div>
    </div>
    <div class="bz-menu">
      <button>文件(F)</button><button>编辑(E)</button><button>查找(I)</button><button>选项(O)</button><button>视图(V)</button><button>工具(T)</button><button>帮助(H)</button>
    </div>
    <div class="bz-tools">
      <button class="split"><svg><use href="#t-open" /></svg>打开</button>
      <button class="drop" aria-label="打开选项"><svg><use href="#chev" /></svg></button>
      <button class="split"><svg><use href="#t-extract" /></svg>解压</button>
      <button class="drop" aria-label="解压选项"><svg><use href="#chev" /></svg></button>
      <button><svg><use href="#t-new" /></svg>新建</button>
      <button><svg><use href="#t-add" /></svg>添加</button>
      <button><svg><use href="#t-del" /></svg>删除</button>
      <button><svg><use href="#t-test" /></svg>测试</button>
      <button><svg><use href="#t-scan" /></svg>扫描</button>
      <button><svg><use href="#t-view" /></svg>查看</button>
      <button><svg><use href="#t-globe" /></svg>代码页</button>
      <button class="skins" aria-label="外观"><svg><use href="#skins" /></svg></button>
    </div>
    <div class="bz-main">
      <ul class="bz-tree">
        <li><svg class="i16"><use href="#zip-sm" /></svg>套娃.xlsx.zip</li>
        <li class="on"><svg class="i16"><use href="#folder" /></svg>套娃</li>
      </ul>
      <div class="bz-list">
        <table>
          <thead><tr><th>名称<svg class="sort"><use href="#chev" /></svg></th><th class="num">压缩后大小</th><th class="num">原始大小</th><th>类型</th></tr></thead>
          <tbody>
            <tr><td><span class="file"><svg class="i16"><use href="#folder" /></svg>..</span></td><td></td><td></td><td></td></tr>
            <tr class="on"><td><span class="file"><svg class="i16"><use href="#notepad" /></svg>套娃.txt</span></td><td class="num">10,922</td><td class="num">13,650</td><td>TXT 文件</td></tr>
            <tr class="rest"><td></td><td></td><td></td><td></td></tr>
          </tbody>
        </table>
        <div class="hscroll"><div class="hthumb"></div></div>
      </div>
    </div>
    <div class="bz-status">
      <span>已选择 1 个文件, 13.3 KB (压缩后大小: 10.6 KB, 20.0%)</span>
      <div class="bz-views">
        <button class="on" aria-label="详细信息"><svg class="i16"><use href="#s-detail" /></svg></button>
        <button aria-label="图标"><svg class="i14"><use href="#s-pic" /></svg></button>
      </div>
      <svg class="s-zip"><use href="#s-zip" /></svg>
      <span class="bz-count">文件: 1, 文件夹: 1, 压缩文件大小: 11.0 KB</span>
    </div>
  </section>

  <div class="ime"><i class="ime-ball"></i><b>中</b><svg class="i14"><use href="#moon" /></svg><b>°,</b><svg class="i14"><use href="#wrench" /></svg></div>

  <footer class="taskbar">
    <div class="apps">
      <button aria-label="开始"><svg class="i24"><use href="#w-start" /></svg></button>
      <button aria-label="搜索"><svg class="i24"><use href="#w-search" /></svg></button>
      <button aria-label="任务视图"><svg class="i24"><use href="#w-task" /></svg></button>
      <button aria-label="Edge" class="run"><svg class="i24"><use href="#w-edge" /></svg></button>
      <button aria-label="助手"><svg class="i24"><use href="#w-blue" /></svg></button>
      <button aria-label="Obsidian" class="run"><svg class="i24"><use href="#w-obs" /></svg></button>
      <button aria-label="文件资源管理器" class="run"><svg class="i24"><use href="#w-folder" /></svg></button>
      <button aria-label="PyCharm" class="run"><svg class="i24"><use href="#w-pc" /></svg></button>
      <button aria-label="Bc" class="run"><svg class="i24"><use href="#w-b" /></svg></button>
      <button aria-label="终端" class="run"><svg class="i24"><use href="#w-term" /></svg></button>
      <button aria-label="Navicat" class="run"><svg class="i24"><use href="#w-nav" /></svg></button>
      <button aria-label="IDA" class="run"><svg class="i24"><use href="#w-lady" /></svg></button>
      <button aria-label="远程桌面" class="run"><svg class="i24"><use href="#w-remote" /></svg></button>
      <button aria-label="Word" class="run"><svg class="i24"><use href="#w-word" /></svg></button>
      <button aria-label="Everything" class="run"><svg class="i24"><use href="#w-every" /></svg></button>
      <button aria-label="网盘" class="run"><svg class="i24"><use href="#netdisk" /></svg></button>
      <button aria-label="VMware" class="run"><svg class="i24"><use href="#w-vm" /></svg></button>
      <button aria-label="微信" class="run alert"><svg class="i24"><use href="#w-wechat" /></svg></button>
      <button aria-label="Typora" class="run focus"><svg class="i24"><use href="#w-typora" /></svg></button>
      <button aria-label="记事本" class="run"><svg class="i24"><use href="#w-notepad" /></svg></button>
      <button aria-label="截图" class="run"><svg class="i24"><use href="#w-snip" /></svg></button>
      <button aria-label="Bandizip" class="run"><svg class="i24"><use href="#bolt-app" /></svg></button>
      <button aria-label="羊驼" class="run"><svg class="i24"><use href="#w-alpaca" /></svg></button>
      <button aria-label="放大镜" class="run"><svg class="i24"><use href="#w-glass" /></svg></button>
      <button aria-label="ToDesk" class="run alert"><svg class="i24"><use href="#w-todesk" /></svg></button>
    </div>
    <div class="tray">
      <button aria-label="显示隐藏的图标"><svg class="i14 flip"><use href="#chev" /></svg></button>
      <span class="tray-l">L</span><svg class="i14"><use href="#l-m" /></svg><span>中</span>
      <svg class="i16"><use href="#l-pen" /></svg>
      <div class="sys"><svg class="i16"><use href="#l-wifi" /></svg><svg class="i16"><use href="#l-mute" /></svg><svg class="i16"><use href="#l-batt" /></svg></div>
      <div class="clock"><time>14:06:51</time><time>2025/5/11</time></div>
    </div>
  </footer>
</body>
</html>
```
FILE: styles.css
```css
/* Reset and base */
* {
  box-sizing: border-box;
  margin: 0;
  padding: 0;
}

body {
  display: flex;
  flex-direction: column;
  height: 100vh;
  overflow: hidden;
  position: relative;
  background: #181a1b;
  font-family: "Open Sans", "Noto Sans CJK SC", sans-serif;
  font-size: 12px;
  line-height: 16px;
  color: #fff;
}

button, input {
  font: inherit;
  color: inherit;
  background: none;
  border: none;
  outline: none;
}

button {
  display: flex;
  align-items: center;
  justify-content: center;
  white-space: nowrap;
}

a {
  color: inherit;
  text-decoration: none;
}

ul {
  list-style: none;
}

svg {
  flex: none;
  display: block;
}

.defs { position: absolute; width: 0; height: 0; }
.i12 { width: 12px; height: 12px; }
.i14 { width: 14px; height: 14px; }
.i16 { width: 16px; height: 16px; }
.i18 { width: 18px; height: 18px; }
.i22 { width: 22px; height: 22px; }
.i24 { width: 24px; height: 24px; }

/* letters inside the icons */
.cube-letter, .ub-letter, .zip-sm-letter, .zip-letter, .doc-letter, .pc-letter, .word-letter, .typora-letter {
  text-anchor: middle;
  font-weight: bold;
  fill: #fff;
}
.cube-letter { font-size: 9px; fill: #22357f; }
.ub-letter { font-size: 6px; }
.zip-sm-letter { font-size: 7px; }
.zip-letter { font-size: 22px; }
.doc-letter { font: italic bold 34px "Liberation Serif", serif; fill: #2457a8; stroke: #2457a8; stroke-width: 2; }
.pc-letter { font-size: 8px; }
.word-letter { font-size: 9px; }
.typora-letter { font: 18px "Liberation Serif", serif; fill: #222; }

/* Browser */
.browser {
  background: #1c2781;
  border-bottom: 1px solid #3f4a9c;
}

.tab-strip {
  display: flex;
  height: 34px;
  background:
    linear-gradient(#181a50, #181a50) 280px 0 / 112px 19px no-repeat,
    linear-gradient(#181a50, #181a50) 970px 0 / 200px 19px no-repeat,
    linear-gradient(#181a50, #181a50) 1560px 0 / 205px 19px no-repeat,
    #0d1146;
}

.tabs-menu { width: 47px; }

.tab {
  display: flex;
  align-items: center;
  gap: 10px;
  min-width: 0;
  padding: 0 6px;
  color: #c5c7d8;
}

.tab-title {
  flex: 1;
  overflow: hidden;
  white-space: nowrap;
  -webkit-mask-image: linear-gradient(to right, #000 70%, transparent);
  mask-image: linear-gradient(to right, #000 70%, transparent);
}

.tab.active {
  gap: 8px;
  width: 84px;
  padding-right: 9px;
  background: #1c2781;
  border-radius: 8px 8px 0 0;
  color: #fff;
}

.tab.dim svg { opacity: 0.6; }

.tab-list {
  display: grid;
  grid-template-columns: repeat(19, 1fr);
  align-items: center;
  width: 82%;
}

.tab-list .tab {
  height: 20px;
  padding-right: 0;
  border-right: 1px solid #5b5e8c;
}

.new-tab { width: 36px; }

.win-controls {
  display: flex;
  margin-left: auto;
  color: #8284a3;
}

.win-controls button { width: 46px; }

.toolbar {
  display: flex;
  align-items: center;
  height: 39px;
}

.nav-btn {
  width: 36px;
  height: 32px;
}

.nav-btn:first-child { margin-left: 2px; }

.address {
  display: flex;
  align-items: center;
  flex: 1;
  gap: 10px;
  height: 32px;
  margin-left: 6px;
  padding: 0 7px 0 8px;
  background: #333d8c;
  border: 1px solid #6e76b4;
  border-radius: 16px;
  color: #dfe1f0;
}

.address input {
  flex: 1;
  font-family: Roboto, "Noto Sans CJK SC", sans-serif;
  font-size: 14px;
}

.address button {
  width: 22px;
  opacity: 0.6;
}

.extensions { display: flex; margin-left: 6px; }
.extensions button { width: 36px; height: 24px; }

.right-tools {
  margin: 0 0 0 2px;
  padding-left: 4px;
  background: linear-gradient(#525a9f, #525a9f) 0 4px / 1px 16px no-repeat;
}

.copilot { width: 50px; }

.bookmarks {
  display: flex;
  align-items: center;
  gap: 16px;
  height: 28px;
  margin-bottom: 1px;
  padding: 0 12px;
}

.bookmarks a {
  display: flex;
  align-items: center;
  gap: 6px;
  white-space: nowrap;
}

.bookmarks .first { margin-right: 9px; }

.bookmarks .other {
  margin-left: auto;
  padding-left: 14px;
  border-left: 1px solid #525a9f;
}

/* Contest site */
.site {
  flex: 1;
  overflow: hidden;
  font-size: 14px;
  color: #a8a095;
}

.site-head {
  display: flex;
  align-items: center;
  height: 80px;
  padding: 0 359px;
  font-size: 16px;
}

.site-logo { width: 42px; height: 42px; }

.site-head h1 {
  margin-left: 8px;
  font-size: 24px;
  line-height: 32px;
  font-weight: normal;
}

.center-link {
  margin-left: 124px;
  color: #2f78b8;
}

.user {
  display: flex;
  align-items: center;
  gap: 12px;
  margin-left: auto;
}

.user-badge {
  width: 28px;
  height: 28px;
  border-radius: 50%;
  background: #104a87;
  font-size: 14px;
  line-height: 28px;
  text-align: center;
}

.site-body { padding: 26px 403px 0; }

.site-tabs {
  display: flex;
  gap: 13px;
  height: 52px;
  align-items: center;
  border-bottom: 1px solid #33373a;
  font-size: 20px;
  line-height: 28px;
}

.site-tabs a {
  display: flex;
  align-items: center;
  gap: 8px;
}

.site-tabs svg { width: 18px; height: 20px; }
.site-tabs .on { color: #2f78b8; }

.segment {
  display: flex;
  margin-top: 10px;
}

.segment button {
  height: 32px;
  padding: 0 12px;
  border: 1px solid #3a3e41;
}

.segment .on, .filters .on, .enter { background: #104a87; }

.duration {
  margin: 24px 26px 16px;
  font-size: 16px;
  line-height: 20px;
}

.filters { display: flex; margin-bottom: 10px; }
.filters button { height: 32px; padding: 0 15px; }

.card {
  width: 236px;
  height: 160px;
  margin-bottom: 10px;
  border: 1px solid #22383c;
}

.card h2 {
  padding: 16px 0 23px;
  font-size: 16px;
  line-height: 20px;
  font-weight: normal;
  text-align: center;
}

.card dl div {
  width: 73px;
  text-align: center;
  background: linear-gradient(#20302f, #20302f) right 7px / 1px 20px no-repeat;
}

.card dt { font-size: 12px; line-height: 16px; }
.card dd { line-height: 24px; }

.enter {
  height: 32px;
  margin: 18px auto 0;
  padding: 0 22px;
  font-size: 16px;
}

.float-widget {
  position: absolute;
  top: 203px;
  right: -16px;
  width: 60px;
  height: 40px;
  border-radius: 20px;
  background: radial-gradient(circle at 22px 14px, #f09a2c 7px, transparent 8px), #f0f0f0;
}

/* Explorer window */
.explorer {
  position: absolute;
  top: 215px;
  left: 872px;
  right: -73px;
  display: flex;
  flex-direction: column;
  height: 634px;
  background: #191919;
  border: 1px solid #444;
  border-radius: 8px;
  overflow: hidden;
  box-shadow: 0 8px 24px rgba(0, 0, 0, 0.5);
}

.ex-top {
  display: flex;
  align-items: flex-end;
  height: 39px;
  padding: 0 86px 0 8px;
  background: #202020;
}

.ex-tab {
  display: flex;
  align-items: center;
  gap: 10px;
  width: 240px;
  height: 32px;
  padding: 0 15px 0 9px;
  background: #2c2c2c;
  border-radius: 8px 8px 0 0;
}

.ex-tab > svg { width: 16px; height: 14px; }
.ex-tab button { margin-left: auto; }
.ex-plus, .ex-min { width: 46px; height: 32px; }
.ex-min { margin-left: auto; height: 50px; color: #999; }

.ex-nav {
  display: flex;
  align-items: center;
  height: 50px;
  background: #2c2c2c;
  border-bottom: 1px solid #3b3b3b;
}

.ex-arrows { display: flex; padding: 0 6px 0 3px; }
.ex-arrows button { width: 48px; }
.ex-arrows .off { color: #777; }

.ex-path {
  display: flex;
  align-items: center;
  gap: 18px;
  width: 642px;
  height: 32px;
  padding: 0 12px;
  border-radius: 4px;
  background: #383838;
}

.ex-path b { font-weight: 600; font-size: 14px; }
.crumb { width: 8px; height: 12px; }

.ex-search {
  flex: 1;
  height: 32px;
  margin-left: 9px;
  padding: 0 14px;
  border-radius: 4px;
  background: #383838;
}

.ex-search::placeholder { color: #d0d0d0; }

.ex-cmd {
  display: flex;
  align-items: center;
  height: 46px;
  padding-left: 650px;
  padding-right: 73px;
  border-bottom: 1px solid #3b3b3b;
}

.ex-more {
  height: 32px;
  margin-left: 18px;
  padding-left: 16px;
  border-left: 1px solid #3b3b3b;
}

.ex-pane-btn { margin-left: auto; }
.ex-pane-btn svg { width: 16px; height: 12px; }

.ex-body { display: flex; height: 472px; }

.ex-files {
  display: grid;
  grid-template-columns: repeat(2, 105px);
  grid-auto-rows: 118px;
  gap: 18px 4px;
  align-content: start;
  justify-content: end;
  width: 823px;
  padding: 6px 7px 0 0;
  border-right: 2px solid #2b2b2b;
}

.ex-files figure {
  display: flex;
  flex-direction: column;
  align-items: center;
  white-space: nowrap;
}

.thumb {
  display: flex;
  align-items: flex-end;
  width: 88px;
  height: 94px;
  margin-bottom: 5px;
}

.ex-files .selected { background: #333; border-radius: 2px; }
.ghost svg { opacity: 0.55; }
.zip-icon { width: 88px; height: 88px; }
.doc-icon { width: 78px; height: 88px; }
.black-thumb { width: 88px; height: 70px; background: #000; }

.ex-preview { flex: 1; }

.ex-picture {
  display: flex;
  align-items: center;
  padding-left: 107px;
  height: 220px;
  background: #202020;
}

.ex-info { padding: 27px 12px 0 22px; }

.ex-info h2 {
  font-size: 16px;
  line-height: 22px;
  font-weight: 600;
}

.share-btn {
  gap: 9px;
  height: 29px;
  margin: 15px 0 32px;
  padding: 0 12px;
  background: #262626;
  border-radius: 4px;
}

.ex-info h3 {
  margin-bottom: 8px;
  font-size: 12px;
  line-height: 18px;
}

.ex-info dl div {
  display: flex;
  justify-content: space-between;
  line-height: 22px;
  color: #c8c8c8;
}

/* Bandizip windows */
.bandizip {
  position: absolute;
  top: 283px;
  width: 1010px;
  height: 741px;
  display: flex;
  flex-direction: column;
  background: #fff;
  border-radius: 8px;
  overflow: hidden;
  color: #000;
}

.bz-back { left: 505px; box-shadow: 0 4px 20px rgba(0, 0, 0, 0.6); }
.bz-front { left: 515px; box-shadow: 0 0 1px 1px rgba(60, 60, 60, 0.5), 0 2px 16px rgba(0, 0, 0, 0.45); }

.bz-title {
  display: flex;
  align-items: center;
  gap: 6px;
  height: 30px;
  padding-left: 8px;
  background: #f2f2f2;
  color: #8c8c8c;
}

.bz-menu {
  display: flex;
  gap: 15px;
  height: 20px;
  padding-left: 7px;
  border-bottom: 1px solid #f0f0f0;
  color: #666;
}

.bz-tools {
  display: flex;
  height: 80px;
  background: linear-gradient(to top right, #0470d8, #2b88de, #55a0e4);
  color: #fff;
}

.bz-tools button {
  flex-direction: column;
  justify-content: flex-start;
  gap: 5px;
  width: 80px;
  padding-top: 14px;
}

.bz-tools button svg {
  width: 38px;
  height: 38px;
  padding: 1px 0;
  fill: none;
  stroke: #fff;
  stroke-width: 1;
  overflow: visible;
}

.bz-tools .split { width: 73px; }
.bz-tools .drop { width: 18px; padding-top: 27px; }
.bz-tools .drop svg { width: 10px; height: 10px; padding: 0; }
.bz-tools .skins { width: 24px; margin-left: auto; margin-right: 6px; padding-top: 12px; }
.bz-tools .skins svg { width: 12px; height: 12px; padding: 0; }

.bz-main {
  display: flex;
  flex: 1;
  min-height: 0;
  border-top: 1px solid #ccc;
}

.bz-tree {
  width: 200px;
  padding: 1px;
  border-right: 5px solid #dedede;
}

.bz-tree li {
  display: flex;
  align-items: center;
  gap: 5px;
  height: 20px;
  padding-left: 3px;
  white-space: nowrap;
}

.bz-tree .on {
  padding-left: 22px;
  border-radius: 2px;
  background: #d8d8d8;
}

.bz-list {
  display: flex;
  flex-direction: column;
  flex: 1;
}

.bz-list table {
  flex: 1;
  display: grid;
  grid-template-rows: 25px 1fr;
}

.bz-list thead, .bz-list tbody { display: grid; }
.bz-list tbody { grid-template-rows: 21px 21px 1fr; }

.bz-list tr {
  display: grid;
  grid-template-columns: 1fr 100px 100px 77px;
}

.bz-list th, .bz-list td {
  padding: 3px 7px 2px;
  border-right: 1px solid #e4eefa;
  font-weight: normal;
  text-align: left;
}

.bz-list th { padding: 5px 5px 0 7px; position: relative; }
.bz-list td:first-child { padding-left: 5px; }
.bz-list th:last-child, .bz-list td:last-child { border-right: none; padding-left: 6px; }
.bz-list .num { text-align: right; }
.bz-list .on { background: #d9d9d9; }
.bz-list .on td { border-color: #c6ccd4; }

.sort {
  position: absolute;
  top: 0;
  left: 50%;
  width: 8px;
  height: 8px;
  transform: rotate(180deg);
}

.file {
  display: flex;
  align-items: center;
  gap: 2px;
}

.hscroll {
  height: 17px;
  padding: 7px 0 0 17px;
  background: #f0f0f0;
}

.hthumb {
  width: 53%;
  height: 2px;
  background: #868686;
}

.bz-status {
  display: flex;
  align-items: center;
  height: 28px;
  padding: 0 25px 0 6px;
  background: #f0f0f0;
  border-top: 1px solid #c8c8c8;
  white-space: nowrap;
}

.bz-views {
  display: flex;
  gap: 4px;
  margin-left: auto;
  padding: 0 5px 0 7px;
  border: 1px solid #ccc;
  border-width: 0 1px;
}

.bz-views button { width: 20px; height: 20px; }
.bz-views .on { background: #cce8f6; border: 1px solid #269fda; }
.s-zip { width: 16px; height: 18px; margin: 0 37px 0 8px; }

.ime {
  position: absolute;
  left: 1502px;
  top: 1002px;
  display: flex;
  align-items: center;
  justify-content: space-between;
  width: 130px;
  height: 26px;
  padding: 0 14px 0 8px;
  border-radius: 5px;
  background: #2b2b2b;
  color: #d8d4c8;
  font-size: 14px;
}

.ime-ball {
  width: 10px;
  height: 10px;
  border-radius: 50%;
  background: radial-gradient(circle at 50% 30%, #ffd98a, #d9851b);
}

/* Taskbar */
.taskbar {
  display: flex;
  justify-content: space-between;
  height: 46px;
  padding: 0 18px 0 11px;
  background: #37386b;
  border-top: 1px solid #55566f;
}

.apps { display: flex; }

.apps button {
  position: relative;
  width: 40px;
  height: 40px;
  margin: 3px 2px;
  border-radius: 4px;
}

.apps .run::after {
  content: "";
  position: absolute;
  bottom: 0;
  width: 6px;
  height: 3px;
  border-radius: 2px;
  background: #9c9cb5;
}

.apps .alert { background: #83434c; }
.apps .alert::after { background: #ff98a4; }
.apps .focus { background: #46477a; }
.apps .focus::after { width: 16px; background: #b9b9d8; }

.tray {
  display: flex;
  align-items: center;
  gap: 20px;
}

.flip { transform: rotate(180deg); }
.tray-l { font-size: 18px; font-weight: 600; color: #1da1e0; }
.sys { display: flex; gap: 8px; margin: 0 -6px 0 4px; }

.clock {
  display: flex;
  flex-direction: column;
  text-align: right;
}
```
